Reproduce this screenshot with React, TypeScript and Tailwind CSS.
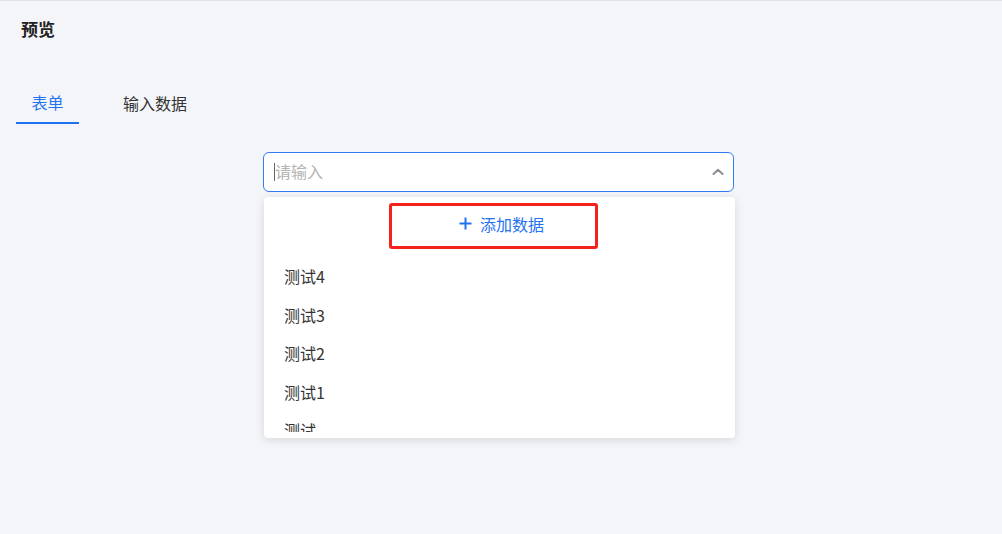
import React from 'react';

const items = ['测试4', '测试3', '测试2', '测试1', '测试'];

export default function App() {
  return (
    <div
      className="w-[1002px] h-[534px] bg-[#f4f5f9] border-t border-[#e2e3e6] text-[#333333] overflow-hidden"
      style={{ fontFamily: '"Noto Sans CJK SC", "Noto Sans", sans-serif' }}
    >
      <h1 className="pl-[21px] pt-[17px] text-[17px] leading-[22px] font-bold text-[#222]">预览</h1>

      <div className="flex pl-[16px] mt-[51px]">
        <div className="w-[63px] flex flex-col items-center">
          <span className="text-[16px] leading-[22px] text-[#1f73f1]">表单</span>
          <div className="mt-[9px] h-[2px] w-full bg-[#1f73f1]" />
        </div>
        <div className="ml-[44px]">
          <span className="text-[16px] leading-[22px] text-[#333]">输入数据</span>
        </div>
      </div>

      <div className="ml-[263px] mt-[28px] w-[471px]">
        <div className="h-[40px] bg-white border border-[#2f7cf6] rounded-[6px] flex items-center pl-[10px] pr-[8px]">
          <div className="w-px h-[18px] bg-[#666]" />
          <span className="text-[16px] text-[#b3b3b3] leading-none mb-[2px]">请输入</span>
          <div className="flex-1" />
          <svg width="14" height="14" viewBox="0 0 14 14" fill="none">
            <path d="M2.5 9L7 4.8L11.5 9" stroke="#8a8d94" strokeWidth="2" strokeLinecap="round" strokeLinejoin="round" />
          </svg>
        </div>

        <div className="mt-[5px] ml-px w-[471px] h-[241px] bg-white rounded-[4px] shadow-[0_2px_10px_rgba(0,0,0,0.12)] pt-[6px]">
          <div className="relative h-[46px] flex items-center justify-center">
            <div className="flex items-center gap-[8px] text-[#1f73f1] ml-[4px] mb-[5px]">
              <svg width="13" height="13" viewBox="0 0 13 13">
                <path d="M6.5 0.5V12.5M0.5 6.5H12.5" stroke="#1f73f1" strokeWidth="2" />
              </svg>
              <span className="text-[16px] leading-none">添加数据</span>
            </div>
            <div className="absolute left-[125px] top-0 w-[209px] h-[46px] border-[3px] border-[#f5221b] rounded-[3px]" />
          </div>
          <div className="mt-[8px] h-[175px] overflow-hidden">
            {items.map((item) => (
              <div key={item} className="h-[38.5px] flex items-center pl-[20px] text-[16px] text-[#333]">
                {item}
              </div>
            ))}
          </div>
        </div>
      </div>
    </div>
  );
}
